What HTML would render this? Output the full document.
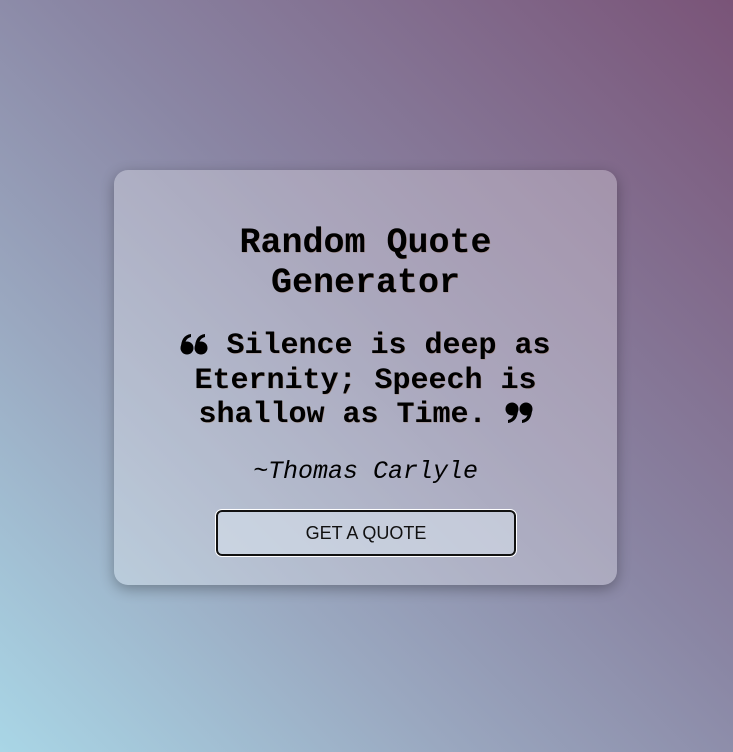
<!DOCTYPE html>
<html><head><style>
html,body{margin:0;padding:0;width:733px;height:752px;overflow:hidden}
body{background:linear-gradient(45deg,#a9d6e6 0%,#9aa8c0 30%,#8a86a4 55%,#7a5478 100%);font-family:"Liberation Mono",monospace;position:relative}
.card{position:absolute;left:114px;top:170px;width:503px;height:415px;border-radius:14px;background:rgba(255,255,255,0.28);box-shadow:0 4px 14px rgba(0,0,0,0.3);text-align:center}
h1{position:absolute;left:0;right:0;top:53px;margin:0;font-size:35px;line-height:40px;font-weight:bold;color:#000;text-shadow:0.5px 0.5px 0 rgba(150,80,20,.35)}
.q{position:absolute;left:40px;right:40px;top:159px;margin:0;font-size:30px;line-height:34.5px;font-weight:bold;text-shadow:0.5px 0.5px 0 rgba(150,80,20,.35)}
.q svg{display:inline-block;vertical-align:-2px}
.a{position:absolute;left:0;right:0;top:285px;font-size:25px;font-style:italic;line-height:34px}
.btn{position:absolute;left:102px;top:340px;width:296px;height:42px;border:2px solid #111;outline:1px solid #fff;border-radius:6px;background:rgba(220,230,240,0.5);font-family:"Liberation Sans",sans-serif;font-size:18px;line-height:42px;color:#111}
</style></head><body>
<div class="card">
<h1>Random Quote<br>Generator</h1>
<p class="q"><svg width="28" height="22" viewBox="0 0 28 22"><g fill="#000"><circle cx="7" cy="15" r="6.5"/><path d="M1 15 C1 7 4 2 11 1 L11 4 C7 5 5 8 5 12 Z"/><circle cx="21" cy="15" r="6.5"/><path d="M15 15 C15 7 18 2 25 1 L25 4 C21 5 19 8 19 12 Z"/></g></svg> Silence is deep as Eternity; Speech is shallow as Time. <svg width="28" height="22" viewBox="0 0 28 22"><g fill="#000" transform="rotate(180 14 11)"><circle cx="7" cy="15" r="6.5"/><path d="M1 15 C1 7 4 2 11 1 L11 4 C7 5 5 8 5 12 Z"/><circle cx="21" cy="15" r="6.5"/><path d="M15 15 C15 7 18 2 25 1 L25 4 C21 5 19 8 19 12 Z"/></g></svg></p>
<div class="a">~Thomas Carlyle</div>
<div class="btn">GET A QUOTE</div>
</div>
</body></html>
